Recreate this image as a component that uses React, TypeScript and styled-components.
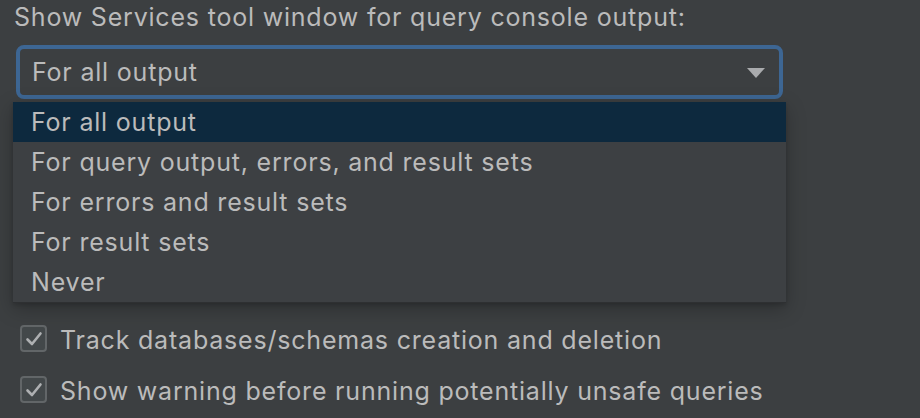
import React from "react";
import styled, { createGlobalStyle } from "styled-components";

const Global = createGlobalStyle`
  html, body { margin: 0; padding: 0; background: #3c3f41; }
  body { width: 920px; height: 418px; overflow: hidden; font-family: Inter, "Open Sans", sans-serif; }
`;

const Page = styled.div`
  position: relative;
  width: 920px;
  height: 418px;
  display: flex;
  flex-direction: column;
  color: #bbbbbb;
  font-size: 25px;
  letter-spacing: 0.8px;
`;

const Label = styled.div`
  line-height: 30px;
  margin: 2px 0 0 14px;
`;

const Combo = styled.div`
  margin: 13px 0 0 16px;
  width: 767px;
  height: 54px;
  box-sizing: border-box;
  border: 4px solid #3d6693;
  border-radius: 8px;
  background: #3c3f41;
  display: flex;
  align-items: center;
  justify-content: space-between;
  padding: 0 14px 0 12px;
`;

const Arrow = styled.svg`
  width: 18px;
  height: 10px;
  margin-top: 1px;
`;

const Spacer = styled.div`
  height: 226px;
`;

const CheckRow = styled.div<{ $gap?: number }>`
  display: flex;
  align-items: center;
  gap: 13px;
  margin: ${(p) => p.$gap ?? 0}px 0 0 20px;
  height: 27px;
`;

const CheckText = styled.span`
  padding-top: 3px;
`;

const Box = styled.div`
  width: 27px;
  height: 27px;
  box-sizing: border-box;
  border: 2px solid #626668;
  border-radius: 4px;
  background: #43484a;
  display: flex;
  align-items: center;
  justify-content: center;
`;

const Popup = styled.div`
  position: absolute;
  left: 13px;
  top: 102px;
  width: 773px;
  height: 200px;
  background: #3d4043;
  border-bottom: 1px solid #2e3032;
  box-shadow: 0 6px 18px rgba(0, 0, 0, 0.25), 0 2px 4px rgba(0, 0, 0, 0.15);
  display: flex;
  flex-direction: column;
`;

const Item = styled.div<{ $selected?: boolean }>`
  height: 40px;
  display: flex;
  align-items: center;
  padding-left: 18px;
  background: ${(p) => (p.$selected ? "#0d293e" : "transparent")};
`;

const Check = () => (
  <svg width="18" height="16" viewBox="0 0 18 16">
    <path d="M2.5 8.5 L7 13 L15.5 2.5" fill="none" stroke="#aeb0b2" strokeWidth="2.6" strokeLinecap="round" strokeLinejoin="round" />
  </svg>
);

const options = [
  "For all output",
  "For query output, errors, and result sets",
  "For errors and result sets",
  "For result sets",
  "Never",
];

export default function App() {
  return (
    <>
      <Global />
      <Page>
        <Label>Show Services tool window for query console output:</Label>
        <Combo>
          <span>For all output</span>
          <Arrow viewBox="0 0 18 10">
            <path d="M0 0 H18 L9 10 Z" fill="#a9abad" />
          </Arrow>
        </Combo>
        <Spacer />
        <CheckRow>
          <Box><Check /></Box>
          <CheckText>Track databases/schemas creation and deletion</CheckText>
        </CheckRow>
        <CheckRow $gap={24}>
          <Box><Check /></Box>
          <CheckText>Show warning before running potentially unsafe queries</CheckText>
        </CheckRow>
        <Popup>
          {options.map((o, i) => (
            <Item key={o} $selected={i === 0}>{o}</Item>
          ))}
        </Popup>
      </Page>
    </>
  );
}
